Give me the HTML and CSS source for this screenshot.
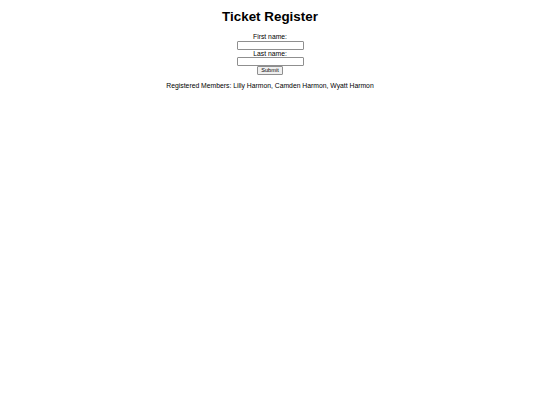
FILE: index.html
```html
<!DOCTYPE html>
<html>
<head>
<meta charset="utf-8">
<link rel="stylesheet" href="styles.css">
</head>
<body>
<div class="page">
  <h1 class="title">Ticket Register</h1>
  <form class="form">
    <label class="label">First name:</label>
    <input class="field" type="text">
    <label class="label label-second">Last name:</label>
    <input class="field" type="text">
    <button class="submit" type="button">Submit</button>
  </form>
  <p class="members">Registered Members: Lilly Harmon, Camden Harmon, Wyatt Harmon</p>
</div>
</body>
</html>
```
FILE: styles.css
```css
html, body {
  margin: 0;
  padding: 0;
  background: #ffffff;
}
.page {
  font-family: "Liberation Sans", Arial, sans-serif;
  color: #000;
  display: flex;
  flex-direction: column;
  align-items: center;
  padding-top: 9px;
}
.title {
  font-size: 13.4px;
  font-weight: bold;
  line-height: 16px;
  margin: 0 0 8px 0;
}
.form {
  display: flex;
  flex-direction: column;
  align-items: center;
  margin: 0;
}
.label {
  font-size: 6.8px;
  line-height: 8px;
}
.label-second {
  line-height: 7px;
}
.field {
  box-sizing: border-box;
  width: 67px;
  height: 9px;
  margin: 0;
  padding: 0;
  border: 1px solid #8f8f8f;
  border-radius: 1px;
  background: #fff;
}
.submit {
  box-sizing: border-box;
  height: 9px;
  margin: 0;
  padding: 0 3px;
  font-family: "Liberation Sans", Arial, sans-serif;
  font-size: 5.6px;
  line-height: 7px;
  border: 1px solid #8f8f8f;
  border-radius: 1px;
  background: #efefef;
  color: #000;
}
.members {
  font-size: 6.8px;
  line-height: 8px;
  margin: 7px 0 0 0;
}
```
